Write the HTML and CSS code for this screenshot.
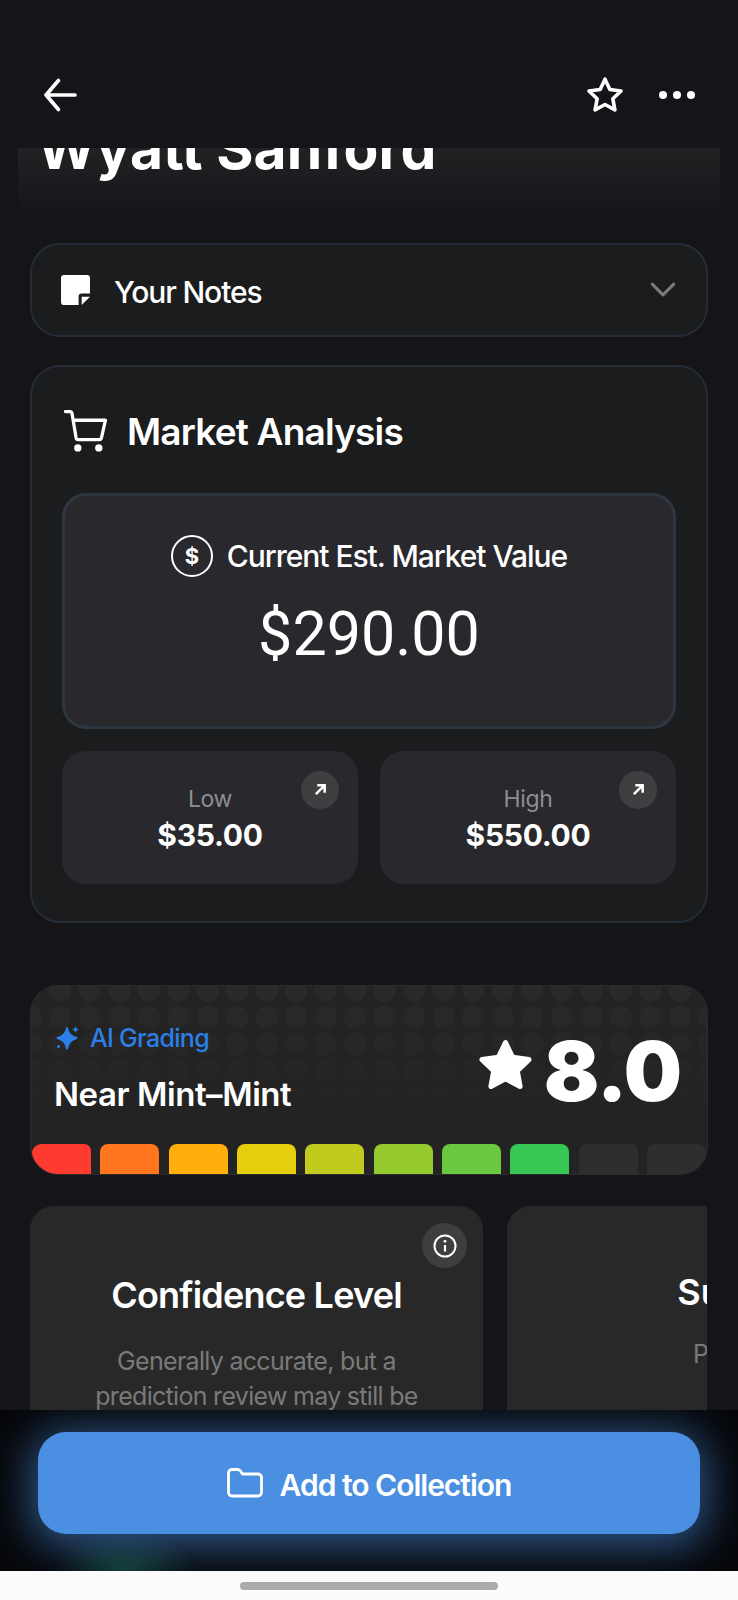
FILE: index.html
```html
<!DOCTYPE html>
<html lang="en">
<head>
<meta charset="utf-8">
<title>Wyatt Sanford</title>
<link rel="stylesheet" href="styles.css">
</head>
<body>
<div class="screen">
  <header class="topbar">
    <svg class="ic-back" viewBox="0 0 32 32"><path d="M30 16H2M14 2 2 16l12 14" fill="none" stroke="#fff" stroke-width="3.6" stroke-linecap="round" stroke-linejoin="round"/></svg>
    <div class="top-actions">
      <svg class="ic-star" viewBox="0 0 36 36"><path d="M18 3l4.600 9.800 10.600 1.400-7.800 7.300 2 10.600L18 27l-9.400 5.100 2-10.600L2.800 14.200l10.600-1.400z" fill="none" stroke="#fff" stroke-width="3.400" stroke-linejoin="round"/></svg>
      <div class="dots"><i></i><i></i><i></i></div>
    </div>
  </header>
  <main class="content">
    <div class="hero"><h1>Wyatt Sanford</h1></div>
    <section class="notes">
      <svg class="ic-note" viewBox="0 0 28 29"><path d="M3 0h22a3 3 0 0 1 3 3v15h-8a3 3 0 0 0-3 3v8H3a3 3 0 0 1-3-3V3a3 3 0 0 1 3-3z" fill="#fff"/><path d="M20 21h8l-8 8z" fill="#fff"/></svg>
      <span class="notes-label">Your Notes</span>
      <svg class="ic-chev" viewBox="0 0 24 14"><path d="M2 2l10 10L22 2" fill="none" stroke="#7b7b7b" stroke-width="2.800" stroke-linecap="round" stroke-linejoin="round"/></svg>
    </section>
    <section class="market">
      <div class="market-head">
        <svg class="ic-cart" viewBox="0 0 43 41"><path d="M1.500 1.500h4.300c1 0 1.800.7 2 1.700l4 24c.2 1 1 1.700 2 1.700h20.700c1 0 1.900-.7 2.100-1.700l3.900-17.200H9" fill="none" stroke="#fff" stroke-width="3.200" stroke-linecap="round" stroke-linejoin="round"/><circle cx="13.500" cy="37" r="3.600" fill="#fff"/><circle cx="34" cy="37" r="3.600" fill="#fff"/></svg>
        <h2>Market Analysis</h2>
      </div>
      <div class="value-box">
        <div class="value-label">
          <span class="ic-dollar">$</span>
          <span>Current Est. Market Value</span>
        </div>
        <div class="value-num">$290.00</div>
      </div>
      <div class="range">
        <div class="range-card">
          <span class="badge"><svg viewBox="0 0 14 14"><path d="M2 12 11 3M3.500 2.500h8v8" fill="none" stroke="#fff" stroke-width="2.700"/></svg></span>
          <div class="range-label">Low</div>
          <div class="range-num">$35.00</div>
        </div>
        <div class="range-card">
          <span class="badge"><svg viewBox="0 0 14 14"><path d="M2 12 11 3M3.500 2.500h8v8" fill="none" stroke="#fff" stroke-width="2.700"/></svg></span>
          <div class="range-label">High</div>
          <div class="range-num">$550.00</div>
        </div>
      </div>
    </section>
    <section class="grading">
      <div class="grading-body">
        <div class="grading-left">
          <div class="ai-tag">
            <svg class="ic-spark" viewBox="0 0 24 26"><path d="M11 3c1 5 3 7.800 9.500 10C14 15.200 12 18 11 23.500 10 18 8 15.200 1.500 13 8 10.800 10 8 11 3z" fill="#2b7fe6" stroke="#2b7fe6" stroke-width="2" stroke-linejoin="round"/><path d="M19.500 1c.3 2 1.200 3 3.500 3.500-2.300.4-3.200 1.500-3.500 3.500-.3-2-1.200-3.100-3.500-3.500 2.300-.5 3.200-1.500 3.500-3.500z" fill="#2b7fe6"/><circle cx="2.500" cy="21.500" r="1.500" fill="#2b7fe6"/></svg>
            <span>AI Grading</span>
          </div>
          <div class="grade-name">Near Mint–Mint</div>
        </div>
        <div class="grade-score">
          <svg class="ic-bigstar" viewBox="0 0 52 48"><path d="M26 3l7 14.500 16 2.200-11.500 11 2.800 15.300L26 38.500 11.700 46l2.800-15.300L3 19.700l16-2.200z" fill="#fff" stroke="#fff" stroke-width="5" stroke-linejoin="round"/></svg>
          <span>8.0</span>
        </div>
      </div>
      <div class="segments">
        <i class="seg s1"></i><i class="seg s2"></i><i class="seg s3"></i><i class="seg s4"></i><i class="seg s5"></i><i class="seg s6"></i><i class="seg s7"></i><i class="seg s8"></i><i class="seg s0"></i><i class="seg s0"></i>
      </div>
    </section>
    <div class="slider">
      <article class="info-card">
        <span class="info-badge"><svg viewBox="0 0 24 24"><circle cx="12" cy="12" r="10.500" fill="none" stroke="#fff" stroke-width="2"/><path d="M12 11v6.500" stroke="#fff" stroke-width="2.200"/><circle cx="12" cy="7.300" r="1.400" fill="#fff"/></svg></span>
        <h3>Confidence Level</h3>
        <p>Generally accurate, but a prediction review may still be</p>
      </article>
      <article class="info-card info-card-next">
        <h3>Subtle</h3>
        <p>Perfect</p>
      </article>
    </div>
  </main>
  <footer class="cta-bar">
    <div class="cta">
      <svg class="ic-folder" viewBox="0 0 36 30"><path d="M1.500 5c0-1.900 1.600-3.500 3.500-3.500h5.500c1 0 2 .5 2.700 1.300l2.300 3.200h15.500c1.900 0 3.500 1.600 3.500 3.500v15c0 1.900-1.600 3.500-3.500 3.500H5c-1.900 0-3.500-1.600-3.500-3.500z" fill="none" stroke="#fff" stroke-width="2.800" stroke-linejoin="round"/></svg>
      <span class="cta-label">Add to Collection</span>
    </div>
  </footer>
  <div class="home-strip"><div class="home-bar"></div></div>
</div>
</body>
</html>
```
FILE: styles.css
```css
* { box-sizing: border-box; }
html, body { margin: 0; padding: 0; }
body { background: #141419; font-family: Inter, "Liberation Sans", sans-serif; color: #fff; }
h1, h2, h3, p { margin: 0; }
.screen { width: 738px; height: 1600px; display: flex; flex-direction: column; overflow: hidden; background: #141419; }

.topbar { height: 148px; flex: none; display: flex; justify-content: space-between; align-items: flex-start; padding: 78px 43px 0 44px; }
.ic-back { width: 33px; height: 34px; }
.top-actions { display: flex; align-items: center; gap: 35px; margin-top: -2px; }
.ic-star { width: 38px; height: 38px; }
.dots { display: flex; gap: 6px; }
.dots i { width: 8px; height: 8px; border-radius: 50%; background: #fff; }

.content { flex: 1; min-height: 0; overflow: hidden; display: flex; flex-direction: column; }
.hero { height: 59px; flex: none; margin: 0 18px; display: flex; align-items: flex-end; overflow: hidden; padding: 0 0 28px 19px; background: linear-gradient(#212223, #16171b); }
.hero h1 { font-size: 57px; font-weight: 700; line-height: 60px; white-space: nowrap; }

.notes { flex: none; height: 94px; margin: 36px 30px 0; display: flex; align-items: center; padding: 0 28px 0 29px; background: #1b1c1e; border: 2px solid #252c38; border-radius: 30px; }
.ic-note { width: 29px; height: 30px; flex: none; }
.notes-label { margin: 3px 0 0 24px; font-size: 30px; font-weight: 500; letter-spacing: -1.100px; flex: 1; }
.ic-chev { width: 26px; height: 15px; flex: none; margin-right: 2px; margin-top: -2px; }

.market { flex: none; height: 558px; margin: 28px 30px 0; padding: 43px 30px 0; background: #1b1c1e; border: 2px solid #252c38; border-radius: 30px; }
.market-head { display: flex; align-items: center; gap: 19px; height: 44px; }
.ic-cart { width: 44px; height: 42px; flex: none; margin: -3px 0 0 2px; }
.market-head h2 { font-size: 37px; font-weight: 600; letter-spacing: -0.8px; margin-top: -2px; }
.value-box { height: 236px; margin-top: 39px; display: flex; flex-direction: column; align-items: center; padding-top: 39px; background: #28282d; border: 3px solid #2e3642; border-radius: 24px; }
.value-label { display: flex; align-items: center; gap: 14px; font-size: 30px; font-weight: 500; letter-spacing: -1.050px; }
.ic-dollar { width: 42px; height: 42px; display: flex; align-items: center; justify-content: center; border: 2px solid #fff; border-radius: 50%; font-size: 22px; font-weight: 700; letter-spacing: 0; }
.value-num { margin-top: 21px; font-family: Roboto, sans-serif; font-size: 61px; line-height: 72px; font-weight: 400; }
.range { display: grid; grid-template-columns: 296px 296px; gap: 22px; margin-top: 22px; }
.range-card { position: relative; height: 133px; display: flex; flex-direction: column; align-items: center; padding-top: 33px; background: #28282d; border-radius: 24px; }
.badge { position: absolute; top: 20px; right: 19px; width: 38px; height: 38px; border-radius: 50%; background: #3f3f41; display: flex; align-items: center; justify-content: center; }
.badge svg { width: 13px; height: 13px; margin-top: -2px; }
.range-label { font-size: 23px; line-height: 30px; letter-spacing: -0.4px; color: #8e8e93; }
.range-num { margin-top: 2px; font-size: 30px; line-height: 38px; font-weight: 700; letter-spacing: -0.3px; }

.grading { flex: none; height: 190px; margin: 62px 30px 0; display: flex; flex-direction: column; justify-content: space-between; overflow: hidden; border: 1px solid #2c2c2e; border-radius: 28px; background-color: #232323;
  background-image: linear-gradient(rgba(35,35,35,0) 0, #232323 66%), radial-gradient(circle at 14.750px 13.500px, #2a2a2a 11px, transparent 11.500px);
  background-size: auto, 29.500px 27px; background-position: 0 0, -15px -9.500px; }
.grading-body { display: flex; justify-content: space-between; padding: 35px 26px 0 24px; }
.ai-tag { display: flex; align-items: center; gap: 10px; height: 34px; font-size: 25px; font-weight: 500; letter-spacing: -0.7px; color: #2b7fe6; }
.ic-spark { width: 24px; height: 26px; flex: none; margin-left: 1px; }
.grade-name { margin: 17px 0 0 -1px; font-size: 33px; line-height: 44px; font-weight: 600; letter-spacing: -0.45px; white-space: nowrap; }
.grade-score { display: flex; align-items: center; gap: 12px; height: 84px; margin-top: 9px; font-size: 82px; font-weight: 900; letter-spacing: -1px; line-height: 84px; }
.ic-bigstar { width: 53px; height: 50px; margin-top: -16px; flex: none; }
.segments { display: grid; grid-template-columns: repeat(10, 1fr); gap: 9.5px; height: 30px; margin: 0 1px; flex: none; }
.seg { display: block; border-radius: 8px 8px 0 0; }
.s1 { background: #ff3b30; border-top-left-radius: 11px; border-bottom-left-radius: 24px; }
.s2 { background: #ff761e; }
.s3 { background: #ffae0c; }
.s4 { background: #e6ce0d; }
.s5 { background: #c1cb1d; }
.s6 { background: #95ca2e; }
.s7 { background: #69c83f; }
.s8 { background: #38c755; }
.s0 { background: #2e2e2e; }

.slider { flex: none; display: flex; gap: 24px; margin: 31px 31px 0 30px; overflow: hidden; }
.info-card { position: relative; flex: none; width: 453px; height: 300px; padding: 63px 40px 0; text-align: center; background: #282828; border-radius: 24px; }
.info-card-next { padding-top: 60px; }
.info-badge { position: absolute; top: 17px; right: 16px; width: 45px; height: 45px; border-radius: 50%; background: #3e3e3e; display: flex; align-items: center; justify-content: center; }
.info-badge svg { width: 24px; height: 24px; }
.info-card h3 { font-size: 36px; line-height: 52px; font-weight: 600; letter-spacing: -0.8px; white-space: nowrap; }
.info-card p { margin-top: 23px; font-size: 25px; line-height: 35px; letter-spacing: -0.7px; color: #7a7a7a; }
.info-card-next h3 { letter-spacing: 0.2px; }
.info-card-next p { margin-top: 19px; }

.cta-bar { flex: none; height: 161px; padding: 22px 38px 0; overflow: hidden; background: #06070a radial-gradient(ellipse 70px 40px at 125px 160px, #0f3a2a 0, transparent 100%); }
.cta { height: 102px; display: flex; align-items: center; justify-content: center; gap: 17px; background: #4a8fe2; border-radius: 28px; font-size: 30px; font-weight: 600; letter-spacing: -1px; box-shadow: 0 6px 40px 8px rgba(74,143,226,.55); }
.cta-label { margin-top: 3px; }
.ic-folder { width: 36px; height: 30px; flex: none; }
.home-strip { flex: none; height: 29px; background: #fbfbfb; display: flex; justify-content: center; padding-top: 11px; }
.home-bar { width: 258px; height: 8px; background: #ababab; border-radius: 4px; }
```
